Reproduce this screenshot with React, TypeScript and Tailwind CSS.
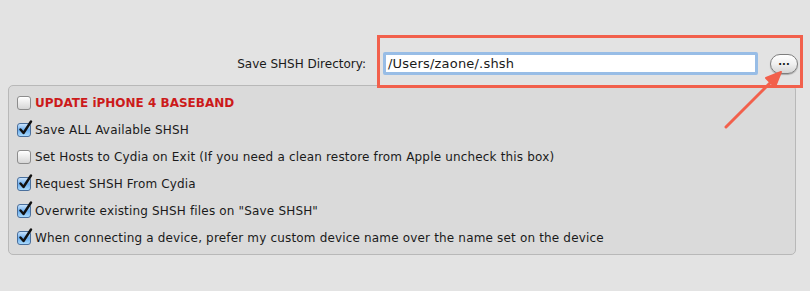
const options = [
  { label: "UPDATE iPHONE 4 BASEBAND", checked: false, warn: true },
  { label: "Save ALL Available SHSH", checked: true },
  { label: "Set Hosts to Cydia on Exit (If you need a clean restore from Apple uncheck this box)", checked: false },
  { label: "Request SHSH From Cydia", checked: true },
  { label: 'Overwrite existing SHSH files on "Save SHSH"', checked: true },
  { label: "When connecting a device, prefer my custom device name over the name set on the device", checked: true },
];

function Checkbox({ checked }: { checked: boolean }) {
  if (!checked) {
    return (
      <span className="w-[14px] h-[14px] rounded-[3px] border border-[#8c8c8c] bg-gradient-to-b from-[#ffffff] to-[#d6d6d6] shadow-[inset_0_1px_0_#fff] shrink-0" />
    );
  }
  return (
    <span className="relative w-[14px] h-[14px] shrink-0">
      <span className="absolute inset-0 rounded-[3px] border border-[#4a6f9c] bg-gradient-to-b from-[#c9e3fb] via-[#6aaef0] to-[#a9dafc]" />
      <svg className="absolute left-[1px] -top-[3px]" width="15" height="16" viewBox="0 0 15 16">
        <path d="M2.5 9.5 L5.5 13 L13 1.5" fill="none" stroke="#111" strokeWidth="2.4" strokeLinecap="round" strokeLinejoin="round" />
      </svg>
    </span>
  );
}

export default function App() {
  return (
    <div className="relative w-[810px] h-[291px] bg-[#e3e3e3] overflow-hidden text-[12px] text-[#1a1a1a] font-['DejaVu_Sans',sans-serif]">
      {/* directory row */}
      <div className="flex items-center justify-end pt-[52px] pr-[12px]">
        <span className="mr-[17px]">Save SHSH Directory:</span>
        <div className="w-[375px] h-[23px] rounded-[2px] border-[3px] border-[#98bde6] bg-white flex items-center pl-[2px]">
          <span className="text-[13px] tracking-[0.2px]">/Users/zaone/.shsh</span>
        </div>
        <button className="ml-[12px] w-[28px] h-[20px] rounded-full border border-[#7e7e7e] bg-gradient-to-b from-[#ffffff] via-[#f0f0f0] to-[#d4d4d4] shadow-[0_1px_1px_rgba(0,0,0,0.25)] flex items-center justify-center text-[10px] font-bold leading-none pb-[3px]">
          ...
        </button>
      </div>

      {/* options panel */}
      <div className="mt-[10px] ml-[8px] mr-[14px] h-[170px] rounded-[5px] border border-[#b8b8b8] bg-[#dadada] pt-[3px] pl-[8px]">
        {options.map((o) => (
          <div key={o.label} className="h-[27px] flex items-center gap-[4px]">
            <Checkbox checked={o.checked} />
            <span className={o.warn ? "text-[#cc1a1a] font-bold" : "tracking-[0.17px]"}>{o.label}</span>
          </div>
        ))}
      </div>

      {/* annotation */}
      <div className="absolute left-[377px] top-[35px] w-[426px] h-[53px] border-[3px] border-[#f2604c]" />
      <svg className="absolute left-0 top-0 pointer-events-none" width="810" height="291">
        <line x1="726" y1="127" x2="772" y2="81" stroke="#f2604c" strokeWidth="3" strokeLinecap="round" />
        <path d="M781 72 L766 78 L775 87 Z" fill="#f2604c" stroke="#f2604c" strokeWidth="2" strokeLinejoin="round" />
      </svg>
    </div>
  );
}
